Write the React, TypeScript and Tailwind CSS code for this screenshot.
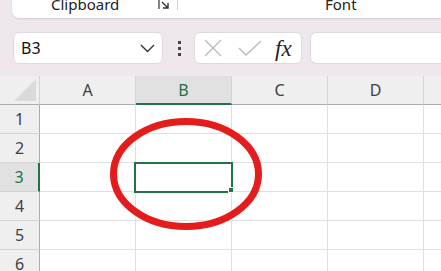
import React from "react";

const cols = ["A", "B", "C", "D", "E"];
const rows = [1, 2, 3, 4, 5, 6];

export default function App() {
  const font = { fontFamily: '"Noto Sans", "Open Sans", sans-serif' };
  return (
    <div
      className="relative w-[441px] h-[271px] overflow-hidden bg-[#eee8ee] flex flex-col"
      style={font}
    >
      {/* Ribbon bottom */}
      <div className="h-[18px] flex shrink-0">
        <div className="ml-[12px] flex-1 bg-white rounded-bl-[7px] shadow-[0_1px_2px_rgba(0,0,0,0.12)] flex items-start overflow-hidden">
          <div className="w-[165px] shrink-0 flex items-start">
            <span className="ml-[39px] -mt-[5px] text-[15px] leading-[18px] text-[#222]">Clipboard</span>
            <svg className="ml-[39px] mt-[0px]" width="13" height="10" viewBox="0 0 13 10">
              <path d="M1 0 V9" stroke="#333" strokeWidth="1.2" fill="none" />
              <path d="M4 2 L10 8 M5 8 H10 V3" stroke="#333" strokeWidth="1.4" fill="none" />
            </svg>
          </div>
          <div className="w-px h-[10px] bg-[#d0d0d0] shrink-0" />
          <span className="ml-[147px] -mt-[5px] text-[15px] leading-[18px] text-[#222]">Font</span>
        </div>
      </div>

      {/* Formula bar */}
      <div className="mt-[14px] h-[32px] flex items-center shrink-0">
        <div className="ml-[13px] w-[150px] shrink-0 h-[32px] bg-white border border-[#dcd8dc] rounded-[6px] flex items-center justify-between pl-[7px] pr-[7px]">
          <span className="text-[16px] text-[#111]">B3</span>
          <svg width="15" height="9" viewBox="0 0 15 9">
            <path d="M1 1 L7.5 7.5 L14 1" stroke="#333" strokeWidth="1.4" fill="none" />
          </svg>
        </div>
        <div className="ml-[15px] w-[3px] shrink-0 flex flex-col gap-[3px]">
          <div className="w-[3px] h-[3px] bg-[#444]" />
          <div className="w-[3px] h-[3px] bg-[#444]" />
          <div className="w-[3px] h-[3px] bg-[#444]" />
        </div>
        <div className="ml-[13px] w-[108px] shrink-0 h-[32px] bg-white border border-[#dcd8dc] rounded-[6px] flex items-center">
          <svg className="ml-[9px]" width="18" height="18" viewBox="0 0 18 18">
            <path d="M1 1 L17 17 M17 1 L1 17" stroke="#b8b8b8" strokeWidth="1.3" fill="none" />
          </svg>
          <svg className="ml-[16px]" width="24" height="16" viewBox="0 0 24 16">
            <path d="M1 8 L8 15 L23 1" stroke="#b8b8b8" strokeWidth="1.3" fill="none" />
          </svg>
          <span
            className="ml-[13px] text-[23px] italic text-[#222] leading-none"
            style={{ fontFamily: '"Liberation Serif", "DejaVu Serif", serif' }}
          >
            fx
          </span>
        </div>
        <div className="ml-[8px] flex-1 h-[32px] bg-white border border-[#dcd8dc] rounded-l-[6px] border-r-0" />
      </div>

      {/* Grid */}
      <div className="mt-[12px] flex-1 bg-white flex flex-col relative">
        {/* header row */}
        <div className="flex h-[29px] shrink-0">
          <div className="w-[40px] shrink-0 h-[29px] bg-[#efefef] border-r border-b border-[#d4d4d4] border-b-[#ababab] relative overflow-hidden">
            <div
              className="absolute right-[3px] bottom-[3px] w-[22px] h-[22px] bg-[#dadada]"
              style={{ clipPath: "polygon(100% 0, 100% 100%, 0 100%)" }}
            />
          </div>
          {cols.map((c) =>
            c === "B" ? (
              <div
                key={c}
                className="w-[96px] shrink-0 h-[29px] bg-[#e1e1e1] border-r border-[#d4d4d4] border-b-2 border-b-[#217346] flex items-center justify-center text-[16px] text-[#217346]"
              >
                {c}
              </div>
            ) : (
              <div
                key={c}
                className="w-[96px] shrink-0 h-[29px] bg-[#efefef] border-r border-b border-[#d4d4d4] border-b-[#ababab] flex items-center justify-center text-[16px] text-[#404040]"
              >
                {c}
              </div>
            )
          )}
        </div>
        {rows.map((r) => (
          <div key={r} className="flex h-[29px] shrink-0">
            {r === 3 ? (
              <div className="w-[40px] shrink-0 h-[29px] bg-[#e1e1e1] border-r-2 border-r-[#217346] border-b border-b-[#d4d4d4] flex items-center justify-center text-[16px] text-[#217346]">
                {r}
              </div>
            ) : (
              <div className="w-[40px] shrink-0 h-[29px] bg-[#efefef] border-r border-r-[#ababab] border-b border-b-[#d4d4d4] flex items-center justify-center text-[16px] text-[#404040]">
                {r}
              </div>
            )}
            {cols.map((c) => (
              <div key={c} className="w-[96px] shrink-0 h-[29px] border-r border-b border-[#e0e0e0]" />
            ))}
          </div>
        ))}

        {/* selection */}
        <div className="absolute left-[134px] top-[86px] w-[99px] h-[31px] border-2 border-[#217346]" />
        <div className="absolute left-[228px] top-[111px] w-[6px] h-[6px] bg-[#217346] border border-white" />

        {/* red ellipse */}
        <svg className="absolute left-0 top-0" width="441" height="195" viewBox="0 0 441 195">
          <ellipse cx="186" cy="98" rx="72.5" ry="52.5" fill="none" stroke="#e41c1c" strokeWidth="7" />
        </svg>
      </div>
    </div>
  );
}
